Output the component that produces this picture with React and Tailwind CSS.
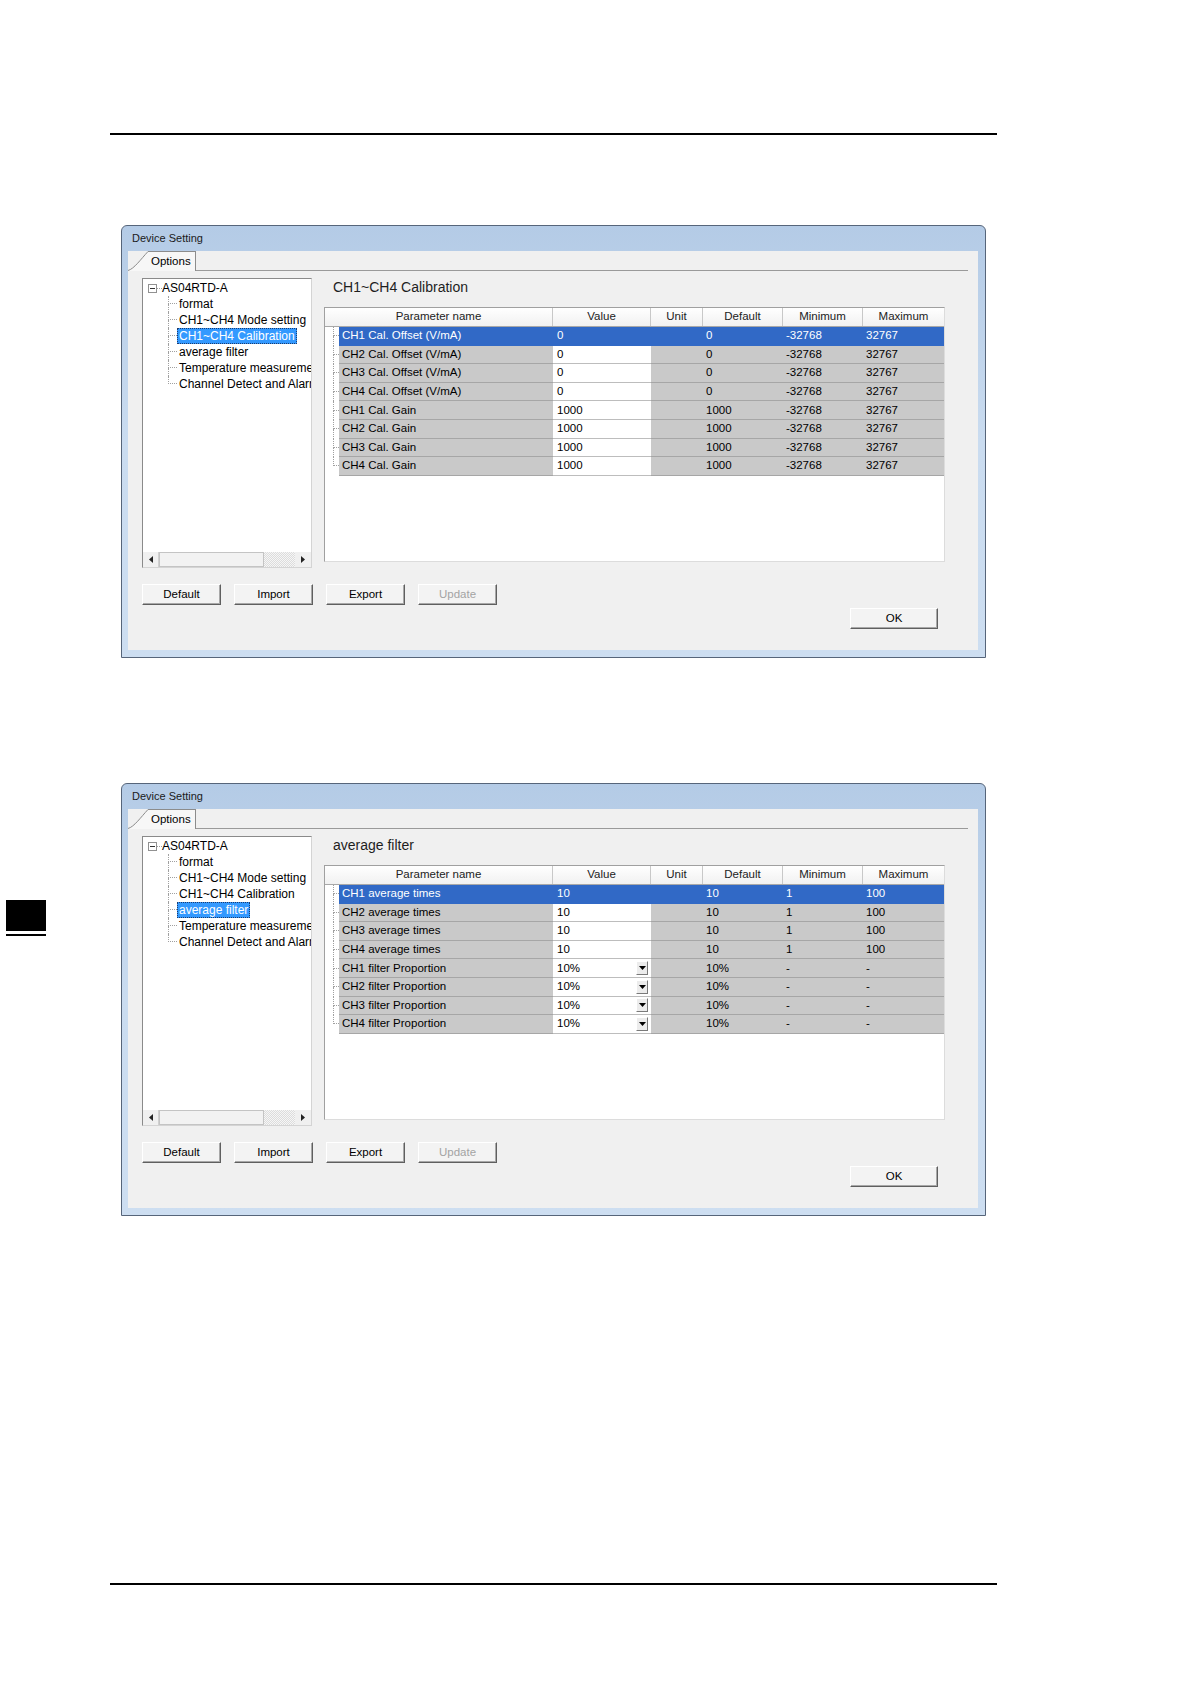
import React from 'react'

const treeItems = [
  'format',
  'CH1~CH4 Mode setting',
  'CH1~CH4 Calibration',
  'average filter',
  'Temperature measurement',
  'Channel Detect and Alarm'
]

const calRows = [
  ['CH1 Cal. Offset (V/mA)', '0', '0', '-32768', '32767'],
  ['CH2 Cal. Offset (V/mA)', '0', '0', '-32768', '32767'],
  ['CH3 Cal. Offset (V/mA)', '0', '0', '-32768', '32767'],
  ['CH4 Cal. Offset (V/mA)', '0', '0', '-32768', '32767'],
  ['CH1 Cal. Gain', '1000', '1000', '-32768', '32767'],
  ['CH2 Cal. Gain', '1000', '1000', '-32768', '32767'],
  ['CH3 Cal. Gain', '1000', '1000', '-32768', '32767'],
  ['CH4 Cal. Gain', '1000', '1000', '-32768', '32767']
]

const filterRows = [
  ['CH1 average times', '10', '10', '1', '100'],
  ['CH2 average times', '10', '10', '1', '100'],
  ['CH3 average times', '10', '10', '1', '100'],
  ['CH4 average times', '10', '10', '1', '100'],
  ['CH1 filter Proportion', '10%', '10%', '-', '-', true],
  ['CH2 filter Proportion', '10%', '10%', '-', '-', true],
  ['CH3 filter Proportion', '10%', '10%', '-', '-', true],
  ['CH4 filter Proportion', '10%', '10%', '-', '-', true]
]

// dotted tree connector: stub at the middle, vertical line unless last
const Conn = ({ last, w = 'w-[9px]' }) => (
  <div className={`${w} h-full flex flex-col shrink-0`}>
    <div className="h-1/2 border-l border-b border-dotted border-[#a0a0a0]" />
    {!last && <div className="h-1/2 border-l border-dotted border-[#a0a0a0]" />}
  </div>
)

const Arrow = ({ dir }) => (
  <svg width="4" height="7" viewBox="0 0 4 7">
    {dir === 'left' ? <polygon points="4,0 0,3.5 4,7" fill="#222" /> : <polygon points="0,0 4,3.5 0,7" fill="#222" />}
  </svg>
)

const Tree = ({ selected }) => (
  <div className="w-[170px] h-[290px] bg-white border border-[#8a8a8a] border-r-[#d4d4d4] border-b-[#d4d4d4] flex flex-col">
    <div className="flex-1 overflow-hidden pt-[1px] text-[12px] text-black whitespace-nowrap">
      <div className="flex items-center h-4 pl-[5px]">
        <div className="w-[9px] h-[9px] border border-[#919191] bg-white flex items-center justify-center shrink-0">
          <div className="w-[5px] h-px bg-[#333]" />
        </div>
        <div className="w-[5px] border-t border-dotted border-[#a0a0a0]" />
        <span>AS04RTD-A</span>
      </div>
      {treeItems.map((item, i) => (
        <div key={item} className="flex items-center h-4 pl-[25px]">
          <Conn last={i === treeItems.length - 1} />
          <span
            className={
              item === selected
                ? 'h-4 leading-[14px] px-[1px] bg-[#3399ff] text-white border border-dotted border-[#1d3c6e]'
                : 'h-4 leading-4 px-[2px]'
            }
          >
            {item}
          </span>
        </div>
      ))}
    </div>
    <div className="h-[15px] flex bg-[#f0f0f0]">
      <div className="w-[16px] flex items-center justify-center border-r border-[#d0d0d0]">
        <Arrow dir="left" />
      </div>
      <div className="w-[105px] bg-[#f2f2f2] border border-[#c4c4c4]" />
      <div className="flex-1 bg-[repeating-conic-gradient(#dcdcdc_0_25%,#f6f6f6_0_50%)] bg-[length:2px_2px]" />
      <div className="w-[16px] flex items-center justify-center">
        <Arrow dir="right" />
      </div>
    </div>
  </div>
)

const Dropdown = () => (
  <div className="w-[12px] h-[14px] mr-[3px] bg-[#ececec] border border-t-white border-l-white border-r-[#7a7a7a] border-b-[#7a7a7a] flex items-center justify-center">
    <svg width="7" height="4" viewBox="0 0 7 4">
      <polygon points="0,0 7,0 3.5,4" fill="#000" />
    </svg>
  </div>
)

const Grid = ({ rows }) => (
  <div className="w-[621px] h-[255px] bg-white border border-[#a0a0a0] border-r-[#dcdcdc] border-b-[#dcdcdc] text-[11.5px] text-black">
    <div className="flex h-[19px] bg-gradient-to-b from-white to-[#f1f1f1] border-b border-[#a8a8a8] text-[#222]">
      <div className="w-[228px] flex items-center justify-center border-r border-[#c8c8c8]">Parameter name</div>
      <div className="w-[98px] flex items-center justify-center border-r border-[#c8c8c8]">Value</div>
      <div className="w-[52px] flex items-center justify-center border-r border-[#c8c8c8]">Unit</div>
      <div className="w-[80px] flex items-center justify-center border-r border-[#c8c8c8]">Default</div>
      <div className="w-[80px] flex items-center justify-center border-r border-[#c8c8c8]">Minimum</div>
      <div className="w-[81px] flex items-center justify-center">Maximum</div>
    </div>
    {rows.map(([name, value, def, min, max, drop], i) => {
      const sel = i === 0
      const cell = sel ? 'bg-[#3169c6] text-white border-[#3169c6]' : 'bg-[#c9c9c9] border-[#a6a6a6]'
      const valCell = sel ? 'bg-[#3169c6] text-white border-[#3169c6]' : 'bg-white border-[#bdbdbd]'
      return (
        <div key={name} className="flex h-[18.6px]">
          <div className="w-[14px] pl-[8px] h-full">
            <Conn last={i === rows.length - 1} w="w-[6px]" />
          </div>
          <div className={`w-[214px] pl-[3px] flex items-center border-b ${cell}`}>{name}</div>
          <div className={`w-[98px] pl-[4px] flex items-center justify-between border-b ${valCell}`}>
            <span>{value}</span>
            {drop && <Dropdown />}
          </div>
          <div className={`w-[52px] border-b ${cell}`} />
          <div className={`w-[80px] pl-[3px] flex items-center border-b ${cell}`}>{def}</div>
          <div className={`w-[80px] pl-[3px] flex items-center border-b ${cell}`}>{min}</div>
          <div className={`w-[81px] pl-[3px] flex items-center border-b ${cell}`}>{max}</div>
        </div>
      )
    })}
  </div>
)

const Btn = ({ children, disabled, w = 'w-[79px]' }) => (
  <button
    className={`${w} h-[21px] bg-[#f3f3f3] border border-t-white border-l-white border-r-[#5f5f5f] border-b-[#5f5f5f] shadow-[inset_-1px_-1px_0_#a8a8a8] text-[11.5px] ${disabled ? 'text-[#a3a3a3]' : 'text-black'}`}
  >
    {children}
  </button>
)

const DeviceWindow = ({ title, selected, rows }) => (
  <div className="w-[865px] h-[433px] rounded-t-[6px] border border-[#56657a] bg-gradient-to-b from-[#b4cbe6] via-[#cadcf0] to-[#cddef1] flex flex-col">
    <div className="h-[25px] pl-[10px] flex items-center text-[11px] text-[#1a1a1a]">Device Setting</div>
    <div className="flex-1 ml-[6px] mr-[7px] mb-[7px] bg-[#f0f0f0] flex flex-col">
      {/* tab strip */}
      <div className="h-[20px] flex items-stretch">
        <svg width="20" height="20" viewBox="0 0 20 20" className="shrink-0">
          <path d="M0 19.5 C 6 18, 13 8, 20 0.5 L20 20 L0 20 Z" fill="#f7f7f7" />
          <path d="M0 19.5 C 6 18, 13 8, 20 0.5" stroke="#8c8c8c" strokeWidth="1" fill="none" />
        </svg>
        <div className="w-[48px] bg-[#f7f7f7] border-t border-r border-[#8c8c8c] flex items-center pl-[3px] text-[11.5px] text-black">
          Options
        </div>
        <div className="flex-1 mr-[10px] border-b border-[#9a9a9a]" />
      </div>
      <div className="pt-[7px] pl-[14px] flex flex-col">
        <div className="flex gap-[12px]">
          <Tree selected={selected} />
          <div className="flex flex-col">
            <div className="h-[29px] pl-[9px] text-[14px] leading-[18px] text-[#1e1e1e]">{title}</div>
            <Grid rows={rows} />
          </div>
        </div>
        <div className="mt-[16px] flex gap-[13px]">
          <Btn>Default</Btn>
          <Btn>Import</Btn>
          <Btn>Export</Btn>
          <Btn disabled>Update</Btn>
        </div>
        <div className="mt-[3px] flex justify-end pr-[40px]">
          <Btn w="w-[88px]">OK</Btn>
        </div>
      </div>
    </div>
  </div>
)

export default function App() {
  return (
    <div className="w-[1191px] min-h-[1684px] bg-white font-['Liberation_Sans',Arial,sans-serif] flex flex-col">
      <div className="mt-[133px] ml-[110px] w-[887px] h-[2px] bg-black" />

      <div className="mt-[90px] ml-[121px]">
        <DeviceWindow title="CH1~CH4 Calibration" selected="CH1~CH4 Calibration" rows={calRows} />
      </div>

      <div className="mt-[125px] flex">
        <div className="ml-[6px] mt-[117px] w-[40px] flex flex-col">
          <div className="h-[31px] bg-black" />
          <div className="mt-[3px] h-[2px] bg-black" />
        </div>
        <div className="ml-[75px]">
          <DeviceWindow title="average filter" selected="average filter" rows={filterRows} />
        </div>
      </div>

      <div className="mt-[367px] ml-[110px] w-[887px] h-[2px] bg-black" />
    </div>
  )
}
